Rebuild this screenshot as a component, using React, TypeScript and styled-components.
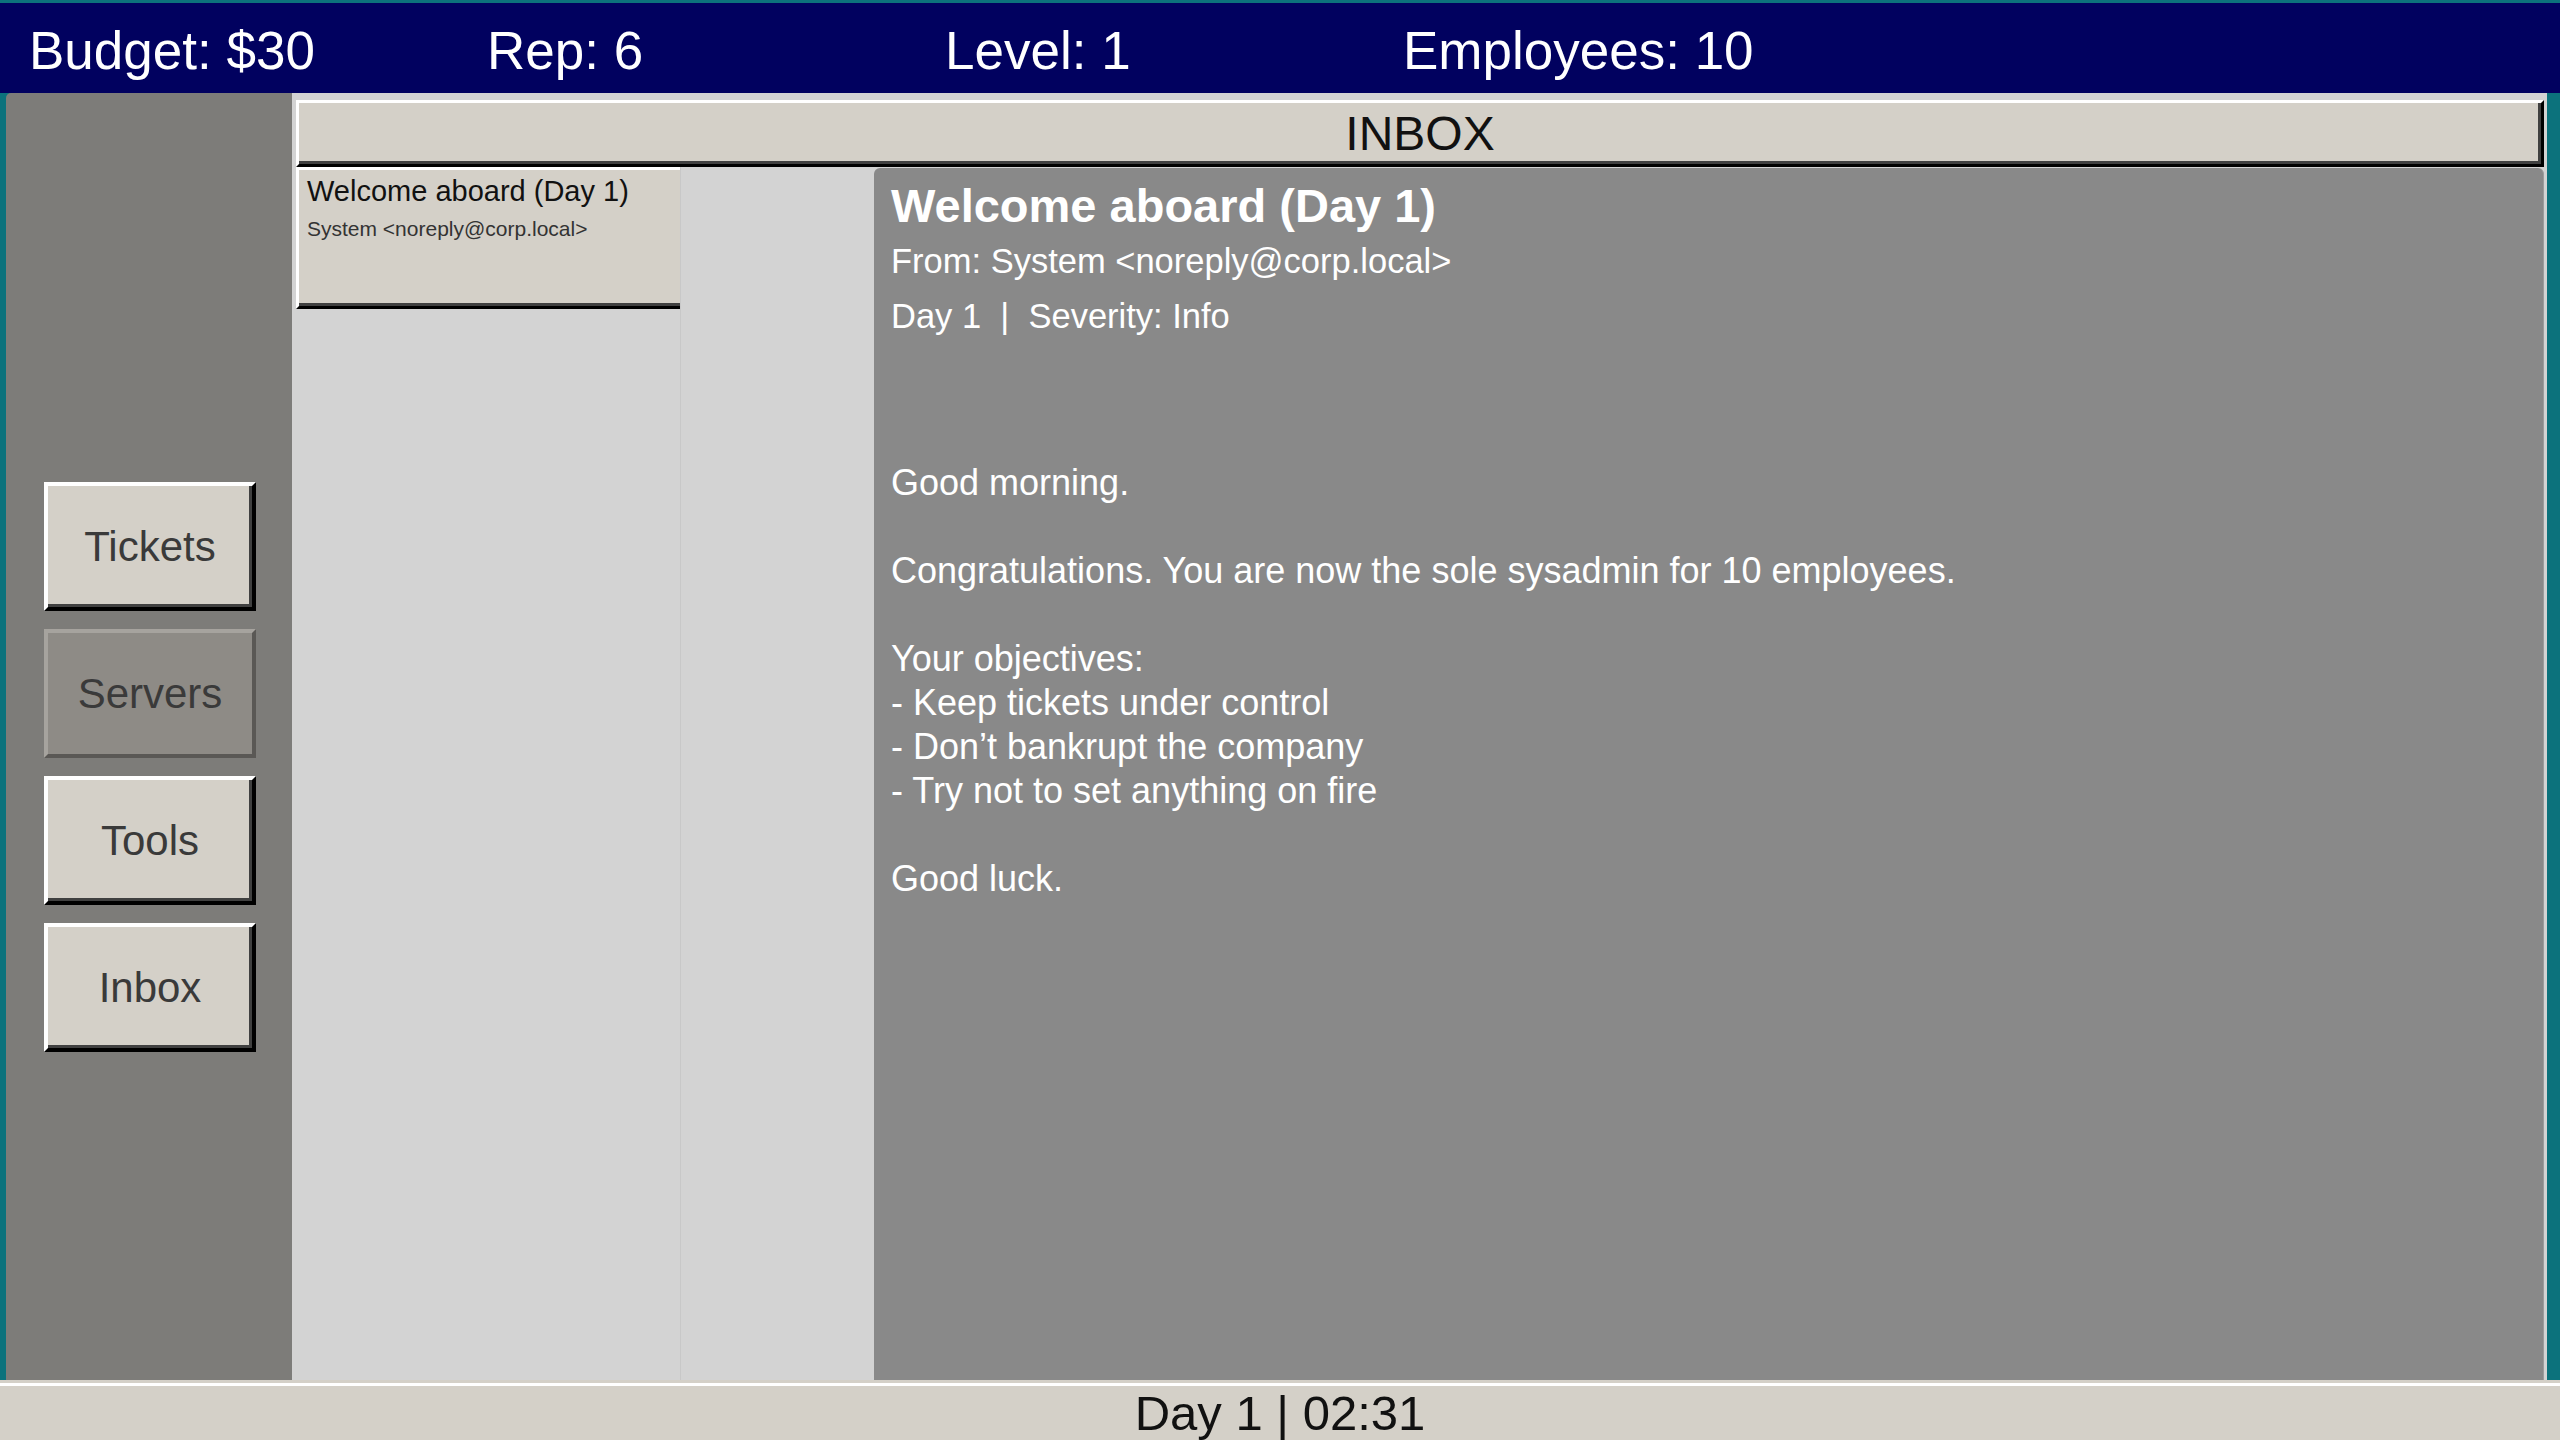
import React from 'react';
import styled, {createGlobalStyle} from 'styled-components';

const GlobalStyle = createGlobalStyle`
    html, body {
        margin: 0;
        padding: 0;
        background: #0c727c;
        font-family: "Liberation Sans", Arial, sans-serif;
        overflow: hidden;
    }
`;

const Shell = styled.div`
    width: 100vw;
    height: 100vh;
    display: flex;
    flex-direction: column;
`;

const TopBar = styled.header`
    margin-top: 3px;
    height: 90px;
    flex-shrink: 0;
    background: #01015f;
    display: flex;
    align-items: center;
    padding: 4px 0 0 29px;
    box-sizing: border-box;
`;

const Stat = styled.div`
    width: 458px;
    color: #ffffff;
    font-size: 53px;
    line-height: 53px;
    white-space: nowrap;
`;

const Main = styled.div`
    flex: 1;
    min-height: 0;
    display: flex;
    padding-left: 6px;
`;

const Sidebar = styled.nav`
    width: 286px;
    flex-shrink: 0;
    background: #7d7c79;
    border-top-left-radius: 5px;
    display: flex;
    flex-direction: column;
    align-items: center;
    padding-top: 389px;
    gap: 18px;
    box-sizing: border-box;
`;

const NavButton = styled.button<{ $active?: boolean }>`
    width: 212px;
    height: 129px;
    margin-left: 2px;
    box-sizing: border-box;
    font-family: inherit;
    font-size: 42px;
    color: #3a3a3a;
    background: ${({$active}) => ($active ? '#8e8b86' : '#d4d0c8')};
    border-style: solid;
    border-width: 4px;
    border-color: ${({$active}) =>
        $active ? '#a6a39e #5a5855 #5a5855 #a6a39e' : '#ffffff #000000 #000000 #ffffff'};
    box-shadow: ${({$active}) => ($active ? 'none' : 'inset -3px -3px 0 #404040')};
    padding: 0;
    cursor: pointer;
`;

const Content = styled.main`
    flex: 1;
    min-width: 0;
    margin-right: 13px;
    background: #d3d3d3;
    padding: 7px 3px 0 4px;
    display: flex;
    flex-direction: column;
    box-sizing: border-box;
`;

const TitleBar = styled.div`
    height: 67px;
    flex-shrink: 0;
    box-sizing: border-box;
    background: #d4d0c8;
    border-style: solid;
    border-width: 3px;
    border-color: #ffffff #000000 #000000 #ffffff;
    box-shadow: inset -3px -3px 0 #404040;
    display: flex;
    align-items: center;
    justify-content: center;
    font-size: 48px;
    color: #111111;
`;

const Panes = styled.div`
    flex: 1;
    min-height: 0;
    display: grid;
    grid-template-columns: 385px 1fr;
    column-gap: 193px;
`;

const MessageList = styled.div`
    border-right: 1px solid #c8c8c8;
    display: flex;
    flex-direction: column;
`;

const MessageItem = styled.div`
    height: 142px;
    box-sizing: border-box;
    background: #d4d0c8;
    border-style: solid;
    border-width: 3px 0 3px 3px;
    border-color: #ffffff #000000 #000000 #ffffff;
    box-shadow: inset 0 -3px 0 #404040;
    padding: 4px 0 0 8px;
`;

const ItemSubject = styled.div`
    font-size: 29px;
    line-height: 34px;
    color: #111111;
    white-space: nowrap;
`;

const ItemSender = styled.div`
    margin-top: 8px;
    font-size: 21px;
    line-height: 26px;
    color: #333333;
    white-space: nowrap;
`;

const Reader = styled.article`
    background: #898989;
    border-top-left-radius: 6px;
    border-top-right-radius: 6px;
    border-right: 1px solid #9c9c9c;
    margin-top: 1px;
    padding: 10px 17px 0;
    color: #ffffff;
    overflow: hidden;
`;

const Subject = styled.h1`
    margin: 0;
    font-size: 47px;
    line-height: 56px;
    font-weight: bold;
    white-space: nowrap;
`;

const Meta = styled.div`
    font-size: 34.5px;
    line-height: 55px;
    white-space: pre;
`;

const Body = styled.div`
    margin-top: 117px;
    font-size: 36px;
    line-height: 44px;
    white-space: pre-wrap;
`;

const StatusBar = styled.footer`
    height: 60px;
    flex-shrink: 0;
    box-sizing: border-box;
    background: #d4d0c8;
    border-top: 3px solid #d4d0c8;
    box-shadow: inset 0 3px 0 #ffffff;
    padding-top: 3px;
    text-align: center;
    font-size: 49px;
    line-height: 54px;
    color: #111111;
`;

const stats = ['Budget: $30', 'Rep: 6', 'Level: 1', 'Employees: 10'];

const navItems = [
    {label: 'Tickets', active: false},
    {label: 'Servers', active: true},
    {label: 'Tools', active: false},
    {label: 'Inbox', active: false},
];

const message = {
    subject: 'Welcome aboard (Day 1)',
    from: 'System <noreply@corp.local>',
    day: 1,
    severity: 'Info',
    body:
        'Good morning.\n\n' +
        'Congratulations. You are now the sole sysadmin for 10 employees.\n\n' +
        'Your objectives:\n' +
        '- Keep tickets under control\n' +
        '- Don\u2019t bankrupt the company\n' +
        '- Try not to set anything on fire\n\n' +
        'Good luck.',
};

function App() {
    return (
        <>
            <GlobalStyle/>
            <Shell>
                <TopBar>
                    {stats.map((s) => (
                        <Stat key={s}>{s}</Stat>
                    ))}
                </TopBar>
                <Main>
                    <Sidebar>
                        {navItems.map((item) => (
                            <NavButton key={item.label} $active={item.active}>
                                {item.label}
                            </NavButton>
                        ))}
                    </Sidebar>
                    <Content>
                        <TitleBar>INBOX</TitleBar>
                        <Panes>
                            <MessageList>
                                <MessageItem>
                                    <ItemSubject>{message.subject}</ItemSubject>
                                    <ItemSender>{message.from}</ItemSender>
                                </MessageItem>
                            </MessageList>
                            <Reader>
                                <Subject>{message.subject}</Subject>
                                <Meta>From: {message.from}</Meta>
                                <Meta>{`Day ${message.day}  |  Severity: ${message.severity}`}</Meta>
                                <Body>{message.body}</Body>
                            </Reader>
                        </Panes>
                    </Content>
                </Main>
                <StatusBar>Day 1 | 02:31</StatusBar>
            </Shell>
        </>
    );
}

export default App;
